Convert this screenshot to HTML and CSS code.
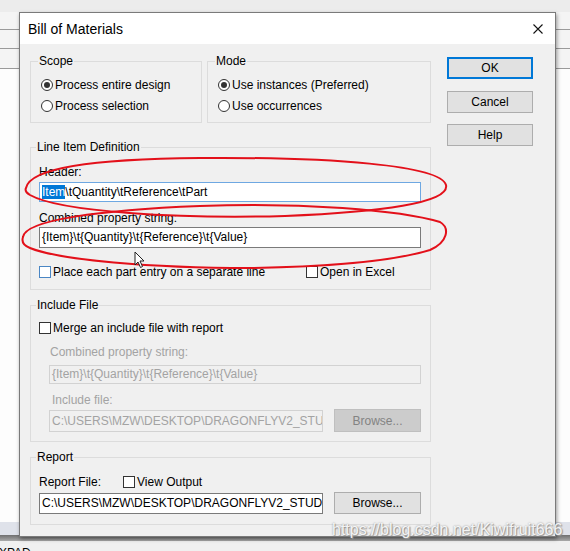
FILE: index.html
```html
<!DOCTYPE html>
<html lang="en">
<head>
  <meta charset="UTF-8" />
  <title>Bill of Materials</title>
  <link rel="stylesheet" href="styles.css">
</head>
<body>
  <div class="desk">
    <div class="top"></div>
    <div class="row r1"></div>
    <div class="row r2"></div>
    <div class="row r3"></div>
    <div class="fill"></div>
    <div class="band"></div>
    <div class="shade"></div>
    <div class="status">XPAD</div>
  </div>

  <div class="dialog">
    <div class="titlebar">
      <span>Bill of Materials</span>
      <svg class="close" width="10" height="10" viewBox="0 0 10 10">
        <path d="M0.5 0.5 L9.5 9.5 M9.5 0.5 L0.5 9.5" stroke="#111" stroke-width="1.1" fill="none"/>
      </svg>
    </div>

    <div class="dlg-body">
      <div class="groups">
        <div class="top-row">
          <fieldset class="grp scope">
            <legend>Scope</legend>
            <div class="opt"><span class="radio on"></span>Process entire design</div>
            <div class="opt"><span class="radio"></span>Process selection</div>
          </fieldset>
          <fieldset class="grp mode">
            <legend>Mode</legend>
            <div class="opt"><span class="radio on"></span>Use instances (Preferred)</div>
            <div class="opt"><span class="radio"></span>Use occurrences</div>
          </fieldset>
        </div>

        <fieldset class="grp lines">
          <legend>Line Item Definition</legend>
          <div class="cap cap-header">Header:</div>
          <div class="edit header"><span class="sel">Item</span>\tQuantity\tReference\tPart</div>
          <div class="cap cap-combined">Combined property string:</div>
          <div class="edit combined">{Item}\t{Quantity}\t{Reference}\t{Value}</div>
          <div class="checks">
            <div class="check wide"><span class="box hover"></span>Place each part entry on a separate line</div>
            <div class="check"><span class="box"></span>Open in Excel</div>
          </div>
        </fieldset>

        <fieldset class="grp include">
          <legend>Include File</legend>
          <div class="check merge"><span class="box"></span>Merge an include file with report</div>
          <div class="cap dim cap-prop">Combined property string:</div>
          <div class="edit off prop">{Item}\t{Quantity}\t{Reference}\t{Value}</div>
          <div class="cap dim cap-file">Include file:</div>
          <div class="filerow inc">
            <div class="edit off path">C:\USERS\MZW\DESKTOP\DRAGONFLYV2_STU</div>
            <div class="btn off">Browse...</div>
          </div>
        </fieldset>

        <fieldset class="grp report">
          <legend>Report</legend>
          <div class="rrow">
            <span class="rlabel">Report File:</span>
            <div class="check"><span class="box"></span>View Output</div>
          </div>
          <div class="filerow rep">
            <div class="edit path">C:\USERS\MZW\DESKTOP\DRAGONFLYV2_STUD</div>
            <div class="btn">Browse...</div>
          </div>
        </fieldset>
      </div>

      <div class="buttons">
        <div class="btn default">OK</div>
        <div class="btn">Cancel</div>
        <div class="btn">Help</div>
      </div>
    </div>
  </div>

  <svg class="marks" width="570" height="551" viewBox="0 0 570 551">
    <path d="M26 188 C30 168 90 159 200 158 C330 157 440 165 446 185 C450 203 380 212 285 216 C180 219 60 212 30 195 C25 192 25 190 26 188 Z" />
    <path d="M23 237 C25 220 100 210 200 206 C300 202 400 210 440 222 C450 228 448 242 430 250 C390 262 320 267 250 268 C150 268 60 260 30 248 C22 245 22 240 23 237 Z" />
  </svg>

  <svg class="pointer" width="12" height="18" viewBox="0 0 12 18">
    <path d="M1 1 L1 14 L4 11 L6.5 16.5 L8.5 15.5 L6 10 L10 10 Z" fill="#fff" stroke="#222" stroke-width="1"/>
  </svg>

  <div class="watermark">https://blog.csdn.net/Kiwifruit666</div>
</body>
</html>
```

FILE: styles.css
```css
* { box-sizing: border-box; }
body {
  margin: 0;
  width: 570px;
  height: 551px;
  overflow: hidden;
  position: relative;
  background: #fff;
  font-family: "Liberation Sans", Arial, sans-serif;
  font-size: 12px;
  color: #000;
}

/* what sits behind the dialog */
.desk .top { height: 12px; background: #ececec; }
.desk .row { background: #f4f4f4; border-bottom: 1px solid #9a9a9a; }
.desk .r1 { height: 18px; }
.desk .r2 { height: 19px; }
.desk .r3 { height: 20px; }
.desk .fill { height: 453px; background: #fdfdfd; }
.desk .band { height: 13px; background: #dfe2ea; }
.desk .shade { height: 6px; background: linear-gradient(#6f6f6f, #a9a9a9); }
.desk .status {
  height: 10px;
  background: #f0f0f0;
  padding: 6px 0 0 0;
  line-height: 12px;
  font-size: 12px;
  text-indent: -1px;
}

/* dialog window */
.dialog {
  position: absolute;
  left: 19px;
  top: 12px;
  width: 537px;
  height: 525px;
  border: 1px solid #7a7a7a;
  background: #f0f0f0;
  box-shadow: 1px 2px 4px rgba(0, 0, 0, 0.4);
  display: flex;
  flex-direction: column;
  overflow: hidden;
}
.titlebar {
  height: 31px;
  flex: none;
  background: #fff;
  display: flex;
  align-items: center;
  justify-content: space-between;
  padding: 0 12px 0 8px;
  font-size: 14px;
}
.dlg-body {
  flex: 1;
  display: flex;
  gap: 16px;
  padding: 10px 0 0 10px;
}
.groups { width: 401px; flex: none; }
.top-row { display: flex; gap: 5px; }

.grp {
  margin: 0;
  min-width: 0;
  border: 1px solid #dcdcdc;
}
.grp legend {
  padding: 0 1px;
  margin-left: -3px;
  line-height: 14px;
  font-size: 12px;
}
.scope { width: 172px; padding: 6px 10px 6px; }
.mode { width: 224px; padding: 6px 10px 6px; }

.opt { height: 21px; display: flex; align-items: center; gap: 2px; white-space: nowrap; }
.radio {
  width: 12px;
  height: 12px;
  flex: none;
  border: 1px solid #333;
  border-radius: 50%;
  background: #fff;
  display: flex;
  align-items: center;
  justify-content: center;
}
.radio.on::after {
  content: "";
  width: 6px;
  height: 6px;
  border-radius: 50%;
  background: #333;
}

.cap { height: 14px; line-height: 14px; white-space: nowrap; }
.dim { color: #a3a3a3; }

.edit {
  border: 1px solid #7a7a7a;
  background: #fff;
  padding: 0 2px;
  white-space: nowrap;
  overflow: hidden;
}
.edit.off { border-color: #d2d2d2; background: #f0f0f0; color: #a3a3a3; }
.sel { background: #0078d7; color: #fff; }

.lines { margin-top: 17px; padding: 11px 9px 9px 8px; }
.cap-header { margin-bottom: 3px; }
.edit.header { height: 20px; line-height: 18px; border-color: #6ea8e2; margin-bottom: 9px; }
.cap-combined { margin-bottom: 2px; }
.edit.combined { height: 21px; line-height: 19px; margin-bottom: 16px; }
.checks { height: 16px; display: flex; align-items: center; }

.check { display: flex; align-items: center; gap: 2px; white-space: nowrap; }
.check.wide { width: 267px; }
.box {
  width: 12px;
  height: 12px;
  flex: none;
  border: 1px solid #333;
  background: #fff;
}
.box.hover { border-color: #4a86c4; }

.include { margin-top: 8px; padding: 9px 9px 9px 8px; }
.merge { height: 14px; margin-bottom: 10px; }
.cap-prop { margin-left: 11px; margin-bottom: 6px; }
.edit.prop { margin-left: 10px; height: 19px; line-height: 17px; margin-bottom: 9px; }
.cap-file { margin-left: 13px; margin-bottom: 2px; }

.filerow { display: flex; align-items: center; gap: 11px; }
.filerow.inc { height: 23px; margin-left: 10px; }
.filerow.inc .path { width: 274px; height: 22px; line-height: 20px; }
.filerow.inc .btn { width: 87px; height: 23px; }

.report { margin-top: 8px; padding: 10px 9px 10px 8px; }
.rrow { height: 15px; display: flex; align-items: center; }
.rlabel { width: 84px; }
.filerow.rep { height: 22px; margin-top: 3px; }
.filerow.rep .path { width: 284px; height: 21px; line-height: 19px; }
.filerow.rep .btn { width: 87px; height: 22px; }

.buttons { padding-top: 3px; width: 86px; }
.btn {
  height: 22px;
  display: flex;
  align-items: center;
  justify-content: center;
  background: #e1e1e1;
  border: 1px solid #adadad;
}
.buttons .btn { margin-bottom: 11px; }
.buttons .default { border: 2px solid #0078d7; margin-bottom: 12px; }
.btn.off { background: #cccccc; border-color: #bfbfbf; color: #838383; }

/* red hand-drawn marks and the mouse pointer, over the dialog */
.marks {
  position: absolute;
  left: 0;
  top: 0;
  pointer-events: none;
}
.marks path { fill: none; stroke: #e3101a; stroke-width: 2; }
.pointer { position: absolute; left: 134px; top: 251px; }

.watermark {
  position: absolute;
  left: 332px;
  top: 521px;
  font-size: 16px;
  line-height: 18px;
  color: rgba(255, 255, 255, 0.9);
  text-shadow: 0 0 2px #8a8a8a, 1px 1px 1px #9a9a9a;
  white-space: nowrap;
}
```
